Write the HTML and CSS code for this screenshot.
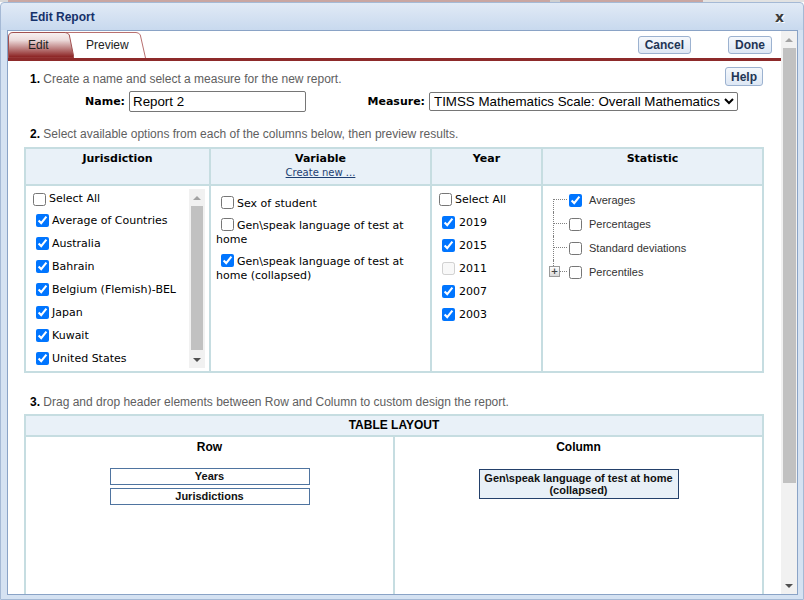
FILE: index.html
```html
<!DOCTYPE html>
<html>
<head>
<meta charset="utf-8">
<title>Edit Report</title>
<link rel="stylesheet" href="styles.css">
</head>
<body>
<div class="topstrip"></div>
<div class="dialog">
  <div class="titlebar">
    <span class="title">Edit Report</span>
    <span class="close">x</span>
  </div>
  <div class="client">
    <div class="main">
      <div class="tabbar">
        <div class="tabs">
          <div class="tab tab-edit">
            <svg class="tabshape" width="66" height="26" viewBox="0 0 66 26">
              <defs>
                <linearGradient id="eg" x1="0" y1="0" x2="0" y2="1">
                  <stop offset="0" stop-color="#f7f2f2"/>
                  <stop offset="0.3" stop-color="#ecdada"/>
                  <stop offset="1" stop-color="#861818"/>
                </linearGradient>
              </defs>
              <path d="M0.5,26 V5 Q0.5,0.5 5,0.5 H57 Q60,0.5 61.3,3 L66,26 Z" fill="url(#eg)" stroke="#a05050" stroke-width="1"/>
            </svg>
            <span class="tablabel">Edit</span>
          </div>
          <div class="tab tab-preview">
            <svg class="tabshape" width="80" height="26" viewBox="0 0 80 26">
              <path d="M0,26 V0.5 H70 Q73,0.5 74.3,3 L79.5,26" fill="#fff" stroke="#b87070" stroke-width="1"/>
            </svg>
            <span class="tablabel">Preview</span>
          </div>
        </div>
        <div class="actions">
          <button class="btn">Cancel</button>
          <button class="btn">Done</button>
        </div>
      </div>

      <div class="content">
        <div class="step1head">
          <div class="steptext"><b>1.</b> Create a name and select a measure for the new report.</div>
          <button class="btn btn-help">Help</button>
        </div>
        <div class="formrow">
          <label class="flabel flabel-name">Name:</label>
          <input class="name-input" type="text" value="Report 2">
          <label class="flabel flabel-measure">Measure:</label>
          <select class="measure">
            <option>TIMSS Mathematics Scale: Overall Mathematics</option>
          </select>
        </div>
        <div class="steptext step2"><b>2.</b> Select available options from each of the columns below, then preview results.</div>

        <div class="grid1">
          <div class="hcell">Jurisdiction</div>
          <div class="hcell">Variable<a class="create">Create new ...</a></div>
          <div class="hcell">Year</div>
          <div class="hcell">Statistic</div>

          <div class="bcell">
            <div class="jlist">
              <div class="jitems">
                <div class="opt opt-all"><input type="checkbox"><span>Select All</span></div>
                <div class="opt sub"><input type="checkbox" checked><span>Average of Countries</span></div>
                <div class="opt sub"><input type="checkbox" checked><span>Australia</span></div>
                <div class="opt sub"><input type="checkbox" checked><span>Bahrain</span></div>
                <div class="opt sub"><input type="checkbox" checked><span>Belgium (Flemish)-BEL</span></div>
                <div class="opt sub"><input type="checkbox" checked><span>Japan</span></div>
                <div class="opt sub"><input type="checkbox" checked><span>Kuwait</span></div>
                <div class="opt sub"><input type="checkbox" checked><span>United States</span></div>
              </div>
              <div class="jscroll">
                <div class="sbtn"><span class="tri-up light"></span></div>
                <div class="jthumb"></div>
                <div class="jtrack"></div>
                <div class="sbtn"><span class="tri-down"></span></div>
              </div>
            </div>
          </div>

          <div class="bcell vcell">
            <div class="vitem"><input type="checkbox">Sex of student</div>
            <div class="vitem"><input type="checkbox">Gen\speak language of test at home</div>
            <div class="vitem"><input type="checkbox" checked>Gen\speak language of test at home (collapsed)</div>
          </div>

          <div class="bcell ycell">
            <div class="yopt"><input type="checkbox"><span>Select All</span></div>
            <div class="yopt sub"><input type="checkbox" checked><span>2019</span></div>
            <div class="yopt sub"><input type="checkbox" checked><span>2015</span></div>
            <div class="yopt sub"><input type="checkbox" disabled><span>2011</span></div>
            <div class="yopt sub"><input type="checkbox" checked><span>2007</span></div>
            <div class="yopt sub"><input type="checkbox" checked><span>2003</span></div>
          </div>

          <div class="bcell scell">
            <div class="trow first"><span class="conn"></span><input type="checkbox" checked><span class="slabel">Averages</span></div>
            <div class="trow"><span class="conn"></span><input type="checkbox"><span class="slabel">Percentages</span></div>
            <div class="trow"><span class="conn"></span><input type="checkbox"><span class="slabel">Standard deviations</span></div>
            <div class="trow last"><span class="conn"><span class="plus">+</span></span><input type="checkbox"><span class="slabel">Percentiles</span></div>
          </div>
        </div>

        <div class="steptext step3"><b>3.</b> Drag and drop header elements between Row and Column to custom design the report.</div>

        <div class="grid2">
          <div class="lhead">TABLE LAYOUT</div>
          <div class="lcell">
            <div class="lh">Row</div>
            <div class="dbox">Years</div>
            <div class="dbox dbox2">Jurisdictions</div>
          </div>
          <div class="lcell">
            <div class="lh">Column</div>
            <div class="cbox">Gen\speak language of test at home<br>(collapsed)</div>
          </div>
        </div>
      </div>
    </div>
    <div class="vscroll">
      <div class="sbtn"><span class="tri-up light"></span></div>
      <div class="mthumb"></div>
      <div class="mtrack"></div>
      <div class="sbtn"><span class="tri-down"></span></div>
    </div>
  </div>
</div>
</body>
</html>
```

FILE: styles.css
```css
* { box-sizing: border-box; }
html, body { margin: 0; padding: 0; }
body {
  width: 804px;
  height: 600px;
  overflow: hidden;
  background: #fff;
  font-family: "Liberation Sans", Arial, sans-serif;
}

.topstrip {
  height: 2px;
  background: linear-gradient(to right, #d8d8d8 0, #d8d8d8 8px, #c9a6a2 8px, #c9a6a2 550px, #cfcfcf 550px, #cfcfcf 560px, #c9a6a2 560px, #c9a6a2 703px, #e2e2e2 703px);
}

.dialog {
  height: 598px;
  border: 1px solid #a5b9d5;
  border-radius: 4px 4px 0 0;
  background: linear-gradient(to bottom, #e1eaf6 0, #c8d9ee 27px, #d5e2f2 27px, #d5e2f2 100%);
  padding: 0 5px 4px 6px;
  display: flex;
  flex-direction: column;
}

.titlebar {
  height: 27px;
  display: flex;
  align-items: center;
  justify-content: space-between;
  padding: 1px 14px 0 23px;
}
.title {
  font: bold 12px "Liberation Sans", Arial, sans-serif;
  color: #15316a;
}
.close {
  font: bold 14px "DejaVu Sans", sans-serif;
  color: #3a3a3a;
  text-shadow: 1px 1px 0 #fff;
  line-height: 14px;
}

.client {
  height: 565px;
  border: 1px solid #8aa3c6;
  background: #fff;
  display: flex;
}

.main {
  width: 773px;
  height: 563px;
  overflow: hidden;
}

/* tabs */
.tabbar {
  height: 30px;
  padding-top: 1px;
  border-bottom: 3px solid #8d2a2a;
  display: flex;
  justify-content: space-between;
  align-items: flex-start;
}
.tabs { display: flex; }
.tab {
  position: relative;
  height: 26px;
  display: flex;
  align-items: center;
  font-size: 12px;
  color: #222;
}
.tabshape { position: absolute; left: 0; top: 0; }
.tablabel { position: relative; padding-left: 20px; }
.tab-edit { width: 66px; z-index: 2; }
.tab-preview { width: 80px; margin-left: -8px; z-index: 1; }

.actions {
  display: flex;
  gap: 37px;
  padding-right: 9px;
  margin-top: 4px;
}
.btn {
  height: 18px;
  padding: 0 6px;
  border: 1px solid #9cb2d0;
  border-radius: 3px;
  background: linear-gradient(to bottom, #f5f8fc, #dde7f4);
  font: bold 12px "Liberation Sans", Arial, sans-serif;
  color: #1f3554;
  line-height: 16px;
}

/* content */
.content { padding: 0 17px 0 16px; }
.step1head {
  margin-top: 6px;
  height: 19px;
  display: flex;
  justify-content: space-between;
  align-items: flex-end;
}
.steptext {
  font-size: 12px;
  line-height: 14px;
  color: #606060;
  padding-left: 6px;
  white-space: nowrap;
}
.steptext b { color: #000; }
.btn-help { height: 19px; width: 38px; padding: 0; margin-right: 1px; }

.formrow {
  margin-top: 5px;
  height: 21px;
  display: flex;
  align-items: center;
}
.flabel {
  font: bold 11px "DejaVu Sans", sans-serif;
  color: #000;
  text-align: right;
}
.flabel-name { width: 101px; margin-right: 4px; }
.flabel-measure { width: 119px; margin-right: 4px; }
.name-input {
  width: 177px;
  height: 21px;
  border: 1px solid #767676;
  border-radius: 2px;
  padding: 0 3px;
  font: 13.33px "Liberation Sans", Arial, sans-serif;
  color: #000;
  margin: 0;
}
.measure {
  width: 309px;
  height: 19px;
  border: 1px solid #767676;
  border-radius: 2px;
  padding: 0;
  font: 13.33px "Liberation Sans", Arial, sans-serif;
  color: #000;
  background: #fff;
  margin: 0;
}

.step2 { margin-top: 15px; }
.step3 { margin-top: 22px; }

/* grid 1 */
.grid1 {
  margin-top: 6px;
  width: 740px;
  display: grid;
  grid-template-columns: 183px 219px 109px 219px;
  grid-template-rows: 35px 185px;
  gap: 2px;
  padding: 2px;
  background: #c6dde1;
}
.hcell {
  background: #e9f1f8;
  text-align: center;
  font: bold 11px/14px "DejaVu Sans", sans-serif;
  color: #000;
  padding-top: 3px;
}
.create {
  display: block;
  font: normal 10px/14px "DejaVu Sans", sans-serif;
  color: #1d3f73;
  text-decoration: underline;
}
.bcell {
  background: #fff;
  font: 11px/14px "DejaVu Sans", sans-serif;
  color: #000;
}
input[type=checkbox] {
  width: 13px;
  height: 13px;
  margin: 0;
  flex: none;
}

.jlist {
  margin: 3px 4px 0 4px;
  height: 179px;
  display: flex;
  overflow: hidden;
}
.jitems { flex: 1; padding-left: 3px; }
.opt {
  height: 23px;
  display: flex;
  align-items: center;
  white-space: nowrap;
}
.opt input { margin-right: 3px; }
.opt-all { height: 20px; }
.opt.sub { padding-left: 3px; }

.jscroll {
  width: 16px;
  background: #f1f1f1;
  display: flex;
  flex-direction: column;
  align-items: center;
}
.sbtn {
  width: 16px;
  height: 17px;
  flex: none;
  display: flex;
  align-items: center;
  justify-content: center;
}
.tri-up, .tri-down {
  width: 0;
  height: 0;
  border-left: 4px solid transparent;
  border-right: 4px solid transparent;
}
.tri-up { border-bottom: 4px solid #505050; }
.tri-up.light { border-bottom-color: #a3a3a3; }
.tri-down { border-top: 4px solid #505050; }
.jthumb { width: 12px; height: 144px; background: #c1c1c1; flex: none; }
.jtrack { flex: 1; }

.vcell { padding: 3px 4px 0 5px; }
.vitem { margin-top: 7px; }
.vitem input {
  display: inline-block;
  vertical-align: -2px;
  margin: 0 3px 0 5px;
}

.ycell { padding: 2px 0 0 7px; }
.yopt {
  height: 23px;
  display: flex;
  align-items: center;
}
.yopt input { margin-right: 3px; }
.yopt.sub { padding-left: 3px; }
.yopt.sub input { margin-right: 4px; }

.scell { padding: 2px 0 0 10px; }
.trow {
  height: 24px;
  display: flex;
  align-items: center;
}
.conn {
  position: relative;
  width: 14px;
  height: 24px;
  margin-right: 2px;
  flex: none;
}
.conn::before {
  content: "";
  position: absolute;
  left: 0;
  top: 11px;
  width: 14px;
  border-top: 1px dotted #808080;
}
.conn::after {
  content: "";
  position: absolute;
  left: 0;
  top: 0;
  bottom: 0;
  border-left: 1px dotted #808080;
}
.trow.first .conn::after { top: 11px; }
.trow.last .conn::after { bottom: 12px; }
.plus {
  position: absolute;
  left: -4px;
  top: 6px;
  width: 11px;
  height: 11px;
  border: 1px solid #9a9a9a;
  background: linear-gradient(to bottom, #ffffff, #d8d8d8);
  font: bold 9px/9px "DejaVu Sans", sans-serif;
  color: #444;
  text-align: center;
  z-index: 1;
}
.slabel {
  margin-left: 7px;
  font: 11px "Liberation Sans", Arial, sans-serif;
  color: #333;
}

/* grid 2 */
.grid2 {
  margin-top: 5px;
  width: 740px;
  display: grid;
  grid-template-columns: 367px 367px;
  grid-template-rows: 19px 200px;
  gap: 2px;
  padding: 2px;
  background: #c6dde1;
}
.lhead {
  grid-column: 1 / 3;
  background: #e9f1f8;
  text-align: center;
  font: bold 12px/19px "Liberation Sans", Arial, sans-serif;
  color: #000;
}
.lcell {
  background: #fff;
  padding-top: 3px;
}
.lh {
  text-align: center;
  font: bold 12px/14px "Liberation Sans", Arial, sans-serif;
  color: #000;
}
.dbox {
  width: 200px;
  height: 17px;
  margin: 14px auto 0;
  border: 1px solid #4f74a0;
  text-align: center;
  font: bold 11px/15px "Liberation Sans", Arial, sans-serif;
  color: #111;
}
.dbox2 { margin-top: 3px; }
.cbox {
  width: 200px;
  margin: 15px auto 0;
  padding: 2px 4px;
  border: 1px solid #23406a;
  background: #e8f0f7;
  text-align: center;
  font: bold 11px/12px "Liberation Sans", Arial, sans-serif;
  color: #111;
}

/* main scrollbar */
.vscroll {
  width: 16px;
  height: 563px;
  background: #f1f1f1;
  display: flex;
  flex-direction: column;
  align-items: center;
}
.mthumb { width: 13px; height: 435px; background: #c1c1c1; flex: none; }
.mtrack { flex: 1; }
```
